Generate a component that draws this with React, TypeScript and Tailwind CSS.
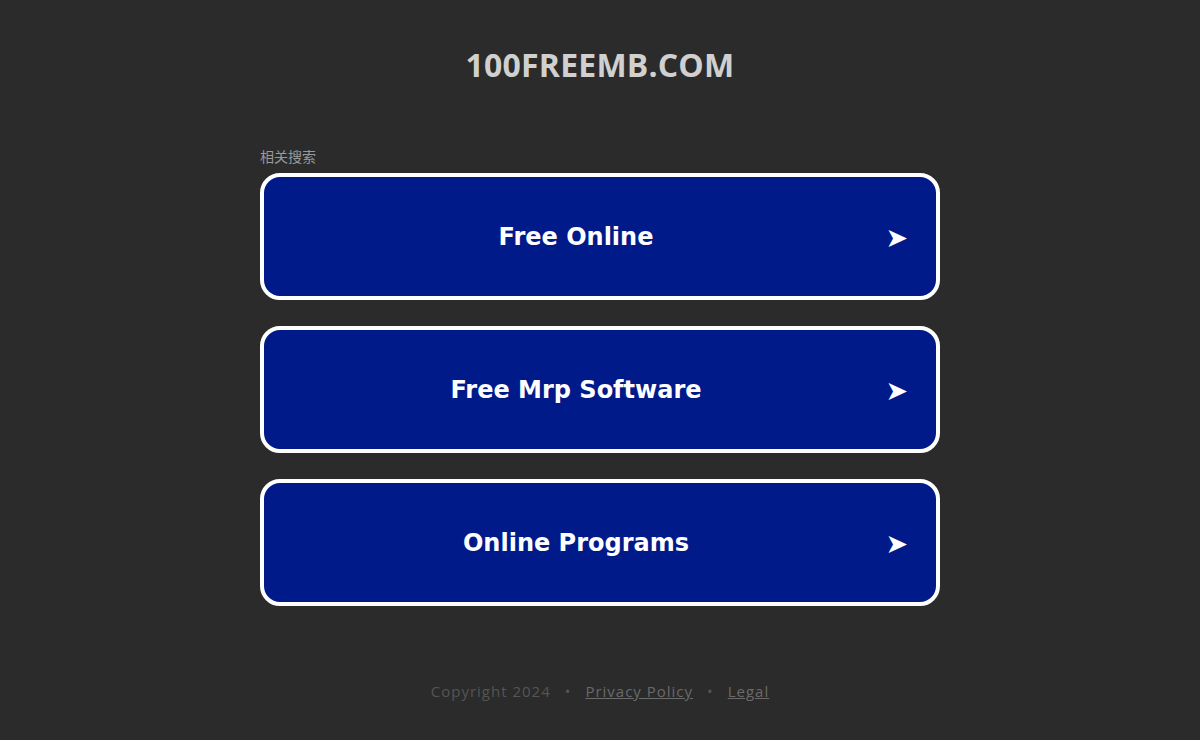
import React from 'react';

const links = ['Free Online', 'Free Mrp Software', 'Online Programs'];

export default function App() {
  return (
    <div className="flex min-h-[740px] flex-col items-center bg-[#2b2b2b] font-['Open_Sans',sans-serif]">
      <h1 className="mt-[44px] text-[32px] font-bold leading-[42px] tracking-[0.2px] text-[#d0d0d0]">100FREEMB.COM</h1>
      <div className="mt-[62px] w-[680px]">
        <p className="mb-[7px] font-['Noto_Sans','Noto_Sans_CJK_SC',sans-serif] text-[14px] leading-[18px] text-[#999]">相关搜索</p>
        <div className="flex flex-col gap-[26px]">
          {links.map((label) => (
            <a
              key={label}
              href="#"
              className="relative flex h-[127px] items-center justify-center rounded-[20px] border-4 border-white bg-[#011a8a] pr-[48px] font-['DejaVu_Sans',Verdana,sans-serif] text-[24px] font-bold text-white"
            >
              {label}
              <span className="absolute right-[28px] top-1/2 -translate-y-1/2 text-[27px] leading-none">➤</span>
            </a>
          ))}
        </div>
      </div>
      <footer className="mt-[74px] flex items-center gap-[14px] text-[15px] tracking-[1px] text-[#555]">
        <span>Copyright 2024</span>
        <span>•</span>
        <a href="#" className="text-[#6a6a6a] underline">Privacy Policy</a>
        <span>•</span>
        <a href="#" className="text-[#6a6a6a] underline">Legal</a>
      </footer>
    </div>
  );
}
